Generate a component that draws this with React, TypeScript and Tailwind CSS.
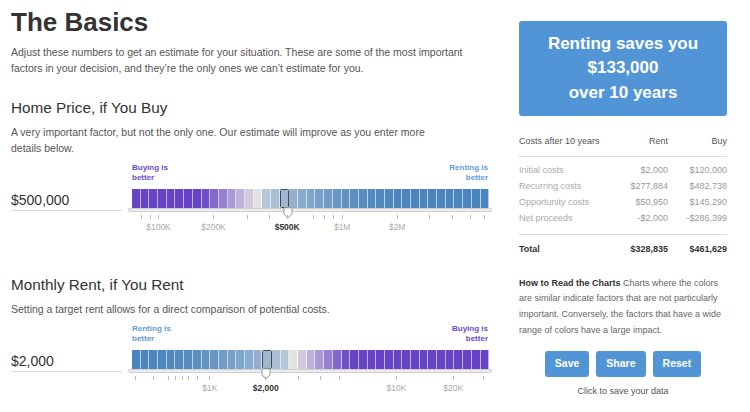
import React from 'react';

type RGB = [number, number, number];

const PURPLE: RGB = [0x66, 0x44, 0xc5];
const BLUE: RGB = [0x4b, 0x85, 0xbd];
const GRAY: RGB = [0xe3, 0xe3, 0xe3];

const mix = (a: RGB, b: RGB, t: number) =>
  `rgb(${a.map((v, i) => Math.round(v + (b[i] - v) * t)).join(',')})`;

const purpleT = (d: number) => Math.min(1, d / 6.5);
const blueT = (d: number) => {
  const x = Math.min(d, 18) / 18;
  return 0.22 + 0.78 * (1 - (1 - x) * (1 - x));
};

// neutral = gray bar index; purpleLeft says which side is purple
function barColors(count: number, neutral: number, purpleLeft: boolean) {
  return Array.from({ length: count }, (_, i) => {
    const d = Math.abs(i - neutral);
    if (d === 0) return mix(GRAY, GRAY, 0);
    const isPurple = i < neutral ? purpleLeft : !purpleLeft;
    return isPurple ? mix(GRAY, PURPLE, purpleT(d)) : mix(GRAY, BLUE, blueT(d));
  });
}

type Tick = { x: number; label?: string; active?: boolean };

type ChartProps = {
  value: string;
  leftLabel: string;
  rightLabel: string;
  leftColor: string;
  rightColor: string;
  colors: string[];
  selected: number;
  handleX: number;
  ticks: Tick[];
  barHeight: string;
};

const SliderRow: React.FC<ChartProps> = ({
  value, leftLabel, rightLabel, leftColor, rightColor, colors, selected, handleX, ticks, barHeight,
}) => (
  <div className="mt-[7.5px] flex items-start">
    <div className="mt-[28px] w-[111px] border-b border-[#ddd] pb-[1px] text-[14px] leading-[18px] text-[#333]">
      {value}
    </div>
    <div className="ml-[6px] w-[364px]">
      <div className="flex h-[20px] justify-between px-[4px] text-[8px] font-bold leading-[10px]">
        <span className={leftColor}>{leftLabel}<br />better</span>
        <span className={`text-right ${rightColor}`}>{rightLabel}<br />better</span>
      </div>
      <div className={`mt-[6px] flex pl-[4px] pr-[2.5px] ${barHeight}`}>
        {colors.map((c, i) => (
          <div
            key={i}
            className={
              i === selected
                ? 'flex-1 rounded-[1.5px] border-[1.5px] border-[#4a4a4a]'
                : 'flex-1 border-r border-white/60'
            }
            style={{ backgroundColor: c }}
          />
        ))}
      </div>
      <div className="relative h-[4px] rounded-full border border-[#cfcfcf] bg-[#ececec]">
        <svg
          className="absolute top-[-2px]"
          style={{ left: handleX - 5 }}
          width="10"
          height="12"
          viewBox="0 0 10 12"
        >
          <path d="M1 0.8 H9 V7 L5 11 L1 7 Z" fill="#fff" stroke="#999" strokeWidth="1" />
        </svg>
      </div>
      <div className="relative h-[20px]">
        {ticks.map((t, i) => (
          <React.Fragment key={i}>
            <div className="absolute top-[3px] h-[4px] w-px bg-[#bbb]" style={{ left: t.x }} />
            {t.label && (
              <div
                className={`absolute top-[10px] -translate-x-1/2 text-[8.5px] leading-[10px] ${
                  t.active ? 'font-bold text-[#333]' : 'text-[#aaa]'
                }`}
                style={{ left: t.x + 0.5 }}
              >
                {t.label}
              </div>
            )}
          </React.Fragment>
        ))}
      </div>
    </div>
  </div>
);

const homeTicks: Tick[] = [
  { x: 12.7 }, { x: 21.7 }, { x: 30, label: '$100K' }, { x: 85, label: '$200K' }, { x: 118.7 },
  { x: 140.7 }, { x: 158.7, label: '$500K', active: true }, { x: 184.7 }, { x: 196 }, { x: 205 },
  { x: 213.7, label: '$1M' }, { x: 268.7, label: '$2M' }, { x: 301.3 }, { x: 323.7 }, { x: 342 }, { x: 356 },
];

const rentTicks: Tick[] = [
  { x: 7.3 }, { x: 25.3 }, { x: 40.3 }, { x: 47 }, { x: 53.7 }, { x: 60.3 }, { x: 68.7 },
  { x: 81.3, label: '$1K' }, { x: 137.3, label: '$2,000', active: true }, { x: 170.3 }, { x: 192 },
  { x: 211.3 }, { x: 268, label: '$10K' }, { x: 324.7, label: '$20K' }, { x: 355.3 },
];

const rows = [
  ['Initial costs', '$2,000', '$120,000'],
  ['Recurring costs', '$277,884', '$482,738'],
  ['Opportunity costs', '$50,950', '$145,290'],
  ['Net proceeds', '-$2,000', '-$286,399'],
];

export default function App() {
  return (
    <div className="flex h-[412px] w-[750px] gap-[27px] overflow-hidden bg-white pl-[11px] font-['Liberation_Sans',Arial,sans-serif]">
      <div className="flex w-[481px] flex-col">
        <h1 className="mt-[7px] text-[26px] font-bold leading-[30px] text-[#333]">The Basics</h1>
        <p className="mt-[7px] whitespace-nowrap text-[10.5px] leading-[16px] text-[#555]">
          Adjust these numbers to get an estimate for your situation. These are some of the most important
          <br />
          factors in your decision, and they&rsquo;re the only ones we can&rsquo;t estimate for you.
        </p>
        <h2 className="mt-[22px] text-[15.3px] leading-[20px] text-[#333]">Home Price, if You Buy</h2>
        <p className="mt-[5.5px] whitespace-nowrap text-[10.5px] leading-[16px] text-[#555]">
          A very important factor, but not the only one. Our estimate will improve as you enter more
          <br />
          details below.
        </p>
        <SliderRow
          value="$500,000"
          leftLabel="Buying is"
          rightLabel="Renting is"
          leftColor="text-[#6a4bcd]"
          rightColor="text-[#5d9dd8]"
          colors={barColors(41, 14, true)}
          selected={17}
          handleX={158.5}
          ticks={homeTicks}
          barHeight="h-[19px]"
        />
        <h2 className="mt-[43px] text-[15.3px] leading-[20px] text-[#333]">Monthly Rent, if You Rent</h2>
        <p className="mt-[5.5px] whitespace-nowrap text-[10.5px] leading-[16px] text-[#555]">
          Setting a target rent allows for a direct comparison of potential costs.
        </p>
        <SliderRow
          value="$2,000"
          leftLabel="Renting is"
          rightLabel="Buying is"
          leftColor="text-[#5d9dd8]"
          rightColor="text-[#6a4bcd]"
          colors={barColors(41, 18, false)}
          selected={15}
          handleX={137.3}
          ticks={rentTicks}
          barHeight="h-[18.5px]"
        />
      </div>

      <div className="flex w-[208px] flex-col">
        <div className="mt-[21px] flex h-[95px] flex-col items-center justify-center rounded-[3px] bg-[#5295d6] text-[17px] font-bold leading-[24.5px] text-white">
          <span>Renting saves you</span>
          <span>$133,000</span>
          <span>over 10 years</span>
        </div>

        <div className="mt-[17px] text-[9px] leading-[16px]">
          <div className="grid h-[24px] grid-cols-[1fr_60px_59px] border-b border-[#ddd] text-[#555]">
            <span>Costs after 10 years</span>
            <span className="text-right">Rent</span>
            <span className="text-right">Buy</span>
          </div>
          <div className="border-b border-[#ddd] pb-[7.5px] pt-[5px]">
            {rows.map(r => (
              <div key={r[0]} className="grid grid-cols-[1fr_60px_59px] text-[#aaa]">
                <span>{r[0]}</span>
                <span className="text-right text-[#999]">{r[1]}</span>
                <span className="text-right text-[#999]">{r[2]}</span>
              </div>
            ))}
          </div>
          <div className="mt-[6px] grid grid-cols-[1fr_60px_59px] font-bold text-[#333]">
            <span>Total</span>
            <span className="text-right">$328,835</span>
            <span className="text-right">$461,629</span>
          </div>
        </div>

        <p className="mt-[19px] whitespace-nowrap text-[9px] leading-[15.7px] text-[#666]">
          <b className="text-[#333]">How to Read the Charts</b> Charts where the colors
          <br />
          are similar indicate factors that are not particularly
          <br />
          important. Conversely, the factors that have a wide
          <br />
          range of colors have a large impact.
        </p>

        <div className="mt-[13px] flex justify-center gap-[7px]">
          {['Save', 'Share', 'Reset'].map(b => (
            <button
              key={b}
              className="h-[26px] rounded-[3px] bg-[#5295d6] px-[10px] text-[10.5px] font-bold text-white"
            >
              {b}
            </button>
          ))}
        </div>
        <div className="mt-[7.5px] text-center text-[9px] leading-[12px] text-[#555]">Click to save your data</div>
      </div>
    </div>
  );
}
